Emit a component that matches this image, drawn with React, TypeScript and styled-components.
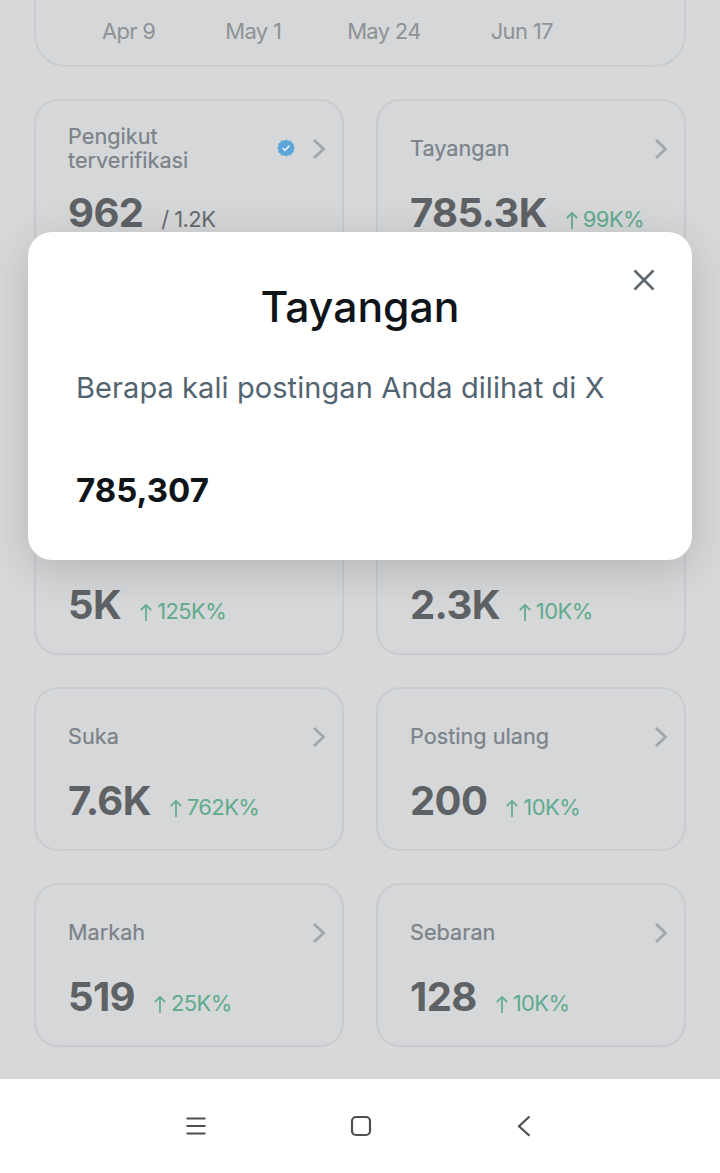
import { FC } from "react";
import styled, { createGlobalStyle } from "styled-components";

type Stat = {
  label?: string;
  value?: string;
  delta?: string;
  suffix?: string;
  verified?: boolean;
};

const stats: Stat[] = [
  { label: "Pengikut terverifikasi", value: "962", suffix: "/ 1.2K", verified: true },
  { label: "Tayangan", value: "785.3K", delta: "99K%" },
  {},
  {},
  { value: "5K", delta: "125K%" },
  { value: "2.3K", delta: "10K%" },
  { label: "Suka", value: "7.6K", delta: "762K%" },
  { label: "Posting ulang", value: "200", delta: "10K%" },
  { label: "Markah", value: "519", delta: "25K%" },
  { label: "Sebaran", value: "128", delta: "10K%" },
];

const dates = ["Apr 9", "May 1", "May 24", "Jun 17"];

const Chevron: FC = () => (
  <ChevronIcon viewBox="0 0 14 22">
    <path d="M2 2l9.5 9L2 20" />
  </ChevronIcon>
);

const StatCard: FC<{ stat: Stat }> = ({ stat }) => (
  <Card>
    {stat.label && (
      <CardHead>
        <Label>{stat.label}</Label>
        {stat.verified && (
          <VerifiedIcon viewBox="0 0 18 18">
            <path
              fill="#5ba4d9"
              d="M9 0.5l2.1 1.3 2.4-.3 1.2 2.1 2.1 1.2-.3 2.4L17.8 9l-1.3 1.8.3 2.4-2.1 1.2-1.2 2.1-2.4-.3L9 17.5l-2.1-1.3-2.4.3-1.2-2.1-2.1-1.2.3-2.4L.2 9l1.3-1.8-.3-2.4 2.1-1.2 1.2-2.1 2.4.3z"
            />
            <path d="M5.6 9.2l2.4 2.2 4.4-4.6" fill="none" stroke="#e6eef4" strokeWidth="1.7" />
          </VerifiedIcon>
        )}
        <Chevron />
      </CardHead>
    )}
    {stat.value && (
      <ValueRow>
        <Value>{stat.value}</Value>
        {stat.suffix && <Suffix>{stat.suffix}</Suffix>}
        {stat.delta && (
          <Delta>
            <ArrowIcon viewBox="0 0 14 20">
              <path d="M7 19V2M1.5 7.5L7 2l5.5 5.5" />
            </ArrowIcon>
            {stat.delta}
          </Delta>
        )}
      </ValueRow>
    )}
  </Card>
);

export default function App() {
  return (
    <>
      <GlobalStyle />
      <Phone>
        <Screen>
          <ChartFoot>
            {dates.map((d) => (
              <DateLabel key={d}>{d}</DateLabel>
            ))}
          </ChartFoot>
          <StatGrid>
            {stats.map((s, i) => (
              <StatCard key={i} stat={s} />
            ))}
          </StatGrid>
          <Modal>
            <CloseButton viewBox="0 0 24 24">
              <path d="M2.5 2.5l19 19M21.5 2.5l-19 19" />
            </CloseButton>
            <ModalTitle>Tayangan</ModalTitle>
            <ModalText>Berapa kali postingan Anda dilihat di X</ModalText>
            <ModalValue>785,307</ModalValue>
          </Modal>
        </Screen>
        <NavBar>
          <NavIcon viewBox="0 0 24 24">
            <path d="M1.5 4.5h19M1.5 12h19M1.5 19.5h19" />
          </NavIcon>
          <NavIcon viewBox="0 0 24 24">
            <rect x="3" y="3" width="18" height="18" rx="4" />
          </NavIcon>
          <NavIcon viewBox="0 0 24 24">
            <path d="M16.5 2.5L6 12.2l10.5 9.6" />
          </NavIcon>
        </NavBar>
      </Phone>
    </>
  );
}

const GlobalStyle = createGlobalStyle`
  html, body {
    margin: 0;
    padding: 0;
    background: #fff;
  }
  * {
    box-sizing: border-box;
  }
`;
const Phone = styled.div`
  display: flex;
  flex-direction: column;
  width: 720px;
  height: 1173px;
  overflow: hidden;
  font-family: Inter, "Liberation Sans", sans-serif;
`;
const Screen = styled.div`
  position: relative;
  flex: 1;
  padding: 0 34px;
  background: #d8d8d8;
  overflow: hidden;
`;
const ChartFoot = styled.div`
  display: flex;
  height: 107px;
  margin-top: -40px;
  padding: 56px 0 0 66px;
  background: #d5d7d9;
  border: 2px solid #c8ccd0;
  border-radius: 32px;
`;
const DateLabel = styled.span`
  margin-left: 70px;
  font-size: 22px;
  line-height: 26px;
  letter-spacing: -0.7px;
  color: #8e9295;
  &:first-child {
    margin-left: 0;
  }
  &:nth-child(3) {
    margin-left: 66px;
  }
`;
const StatGrid = styled.div`
  display: grid;
  grid-template-columns: 310px 310px;
  grid-auto-rows: 164px;
  gap: 32px;
  margin-top: 32px;
`;
const Card = styled.div`
  position: relative;
  display: flex;
  flex-direction: column;
  padding: 23px 16px 0 32px;
  background: #d5d7d9;
  border: 2px solid #c8ccd0;
  border-radius: 24px;
`;
const CardHead = styled.div`
  display: flex;
  align-items: center;
  min-height: 48px;
`;
const Label = styled.div`
  max-width: 170px;
  margin-right: auto;
  font-size: 21.7px;
  line-height: 24px;
  color: #7b8288;
  -webkit-text-stroke: 0.2px #7b8288;
`;
const ChevronIcon = styled.svg`
  width: 14px;
  height: 22px;
  margin-top: 1px;
  margin-left: 17px;
  fill: none;
  stroke: #9fa6ac;
  stroke-width: 2.8;
`;
const VerifiedIcon = styled.svg`
  width: 18px;
  height: 18px;
`;
const ValueRow = styled.div`
  position: absolute;
  left: 32px;
  top: 88px;
  display: flex;
  align-items: baseline;
  white-space: nowrap;
`;
const Value = styled.span`
  font-size: 40px;
  line-height: 48px;
  font-weight: 700;
  letter-spacing: -0.6px;
  color: #5f6265;
`;
const Suffix = styled.span`
  margin-left: 18px;
  font-size: 22px;
  letter-spacing: -0.6px;
  color: #66696c;
`;
const Delta = styled.span`
  display: inline-flex;
  align-items: baseline;
  gap: 4px;
  margin-left: 18px;
  font-size: 22px;
  letter-spacing: -0.6px;
  color: #5fab8c;
`;
const ArrowIcon = styled.svg`
  align-self: center;
  width: 14px;
  height: 19px;
  margin-top: 2px;
  fill: none;
  stroke: #5fab8c;
  stroke-width: 1.8;
`;
const Modal = styled.div`
  position: absolute;
  top: 232px;
  left: 28px;
  width: 664px;
  height: 328px;
  padding: 45px 48px 0;
  background: #fff;
  border-radius: 24px;
  box-shadow: 0 10px 44px rgba(0, 0, 0, 0.16);
`;
const CloseButton = styled.svg`
  position: absolute;
  top: 36px;
  right: 36px;
  width: 24px;
  height: 24px;
  fill: none;
  stroke: #5f676e;
  stroke-width: 2.6;
`;
const ModalTitle = styled.div`
  text-align: center;
  font-size: 42.7px;
  line-height: 60px;
  font-weight: 500;
  color: #0f1419;
`;
const ModalText = styled.div`
  margin-top: 31px;
  font-size: 29px;
  line-height: 40px;
  letter-spacing: 0.08px;
  color: #536471;
`;
const ModalValue = styled.div`
  margin-top: 60px;
  font-size: 33px;
  line-height: 44px;
  font-weight: 700;
  color: #0f1419;
`;
const NavBar = styled.div`
  display: flex;
  justify-content: center;
  align-items: center;
  gap: 140px;
  height: 94px;
  padding-left: 2px;
  background: #fff;
`;
const NavIcon = styled.svg`
  width: 24px;
  height: 24px;
  fill: none;
  stroke: #4f4f4f;
  stroke-width: 2.2;
`;
